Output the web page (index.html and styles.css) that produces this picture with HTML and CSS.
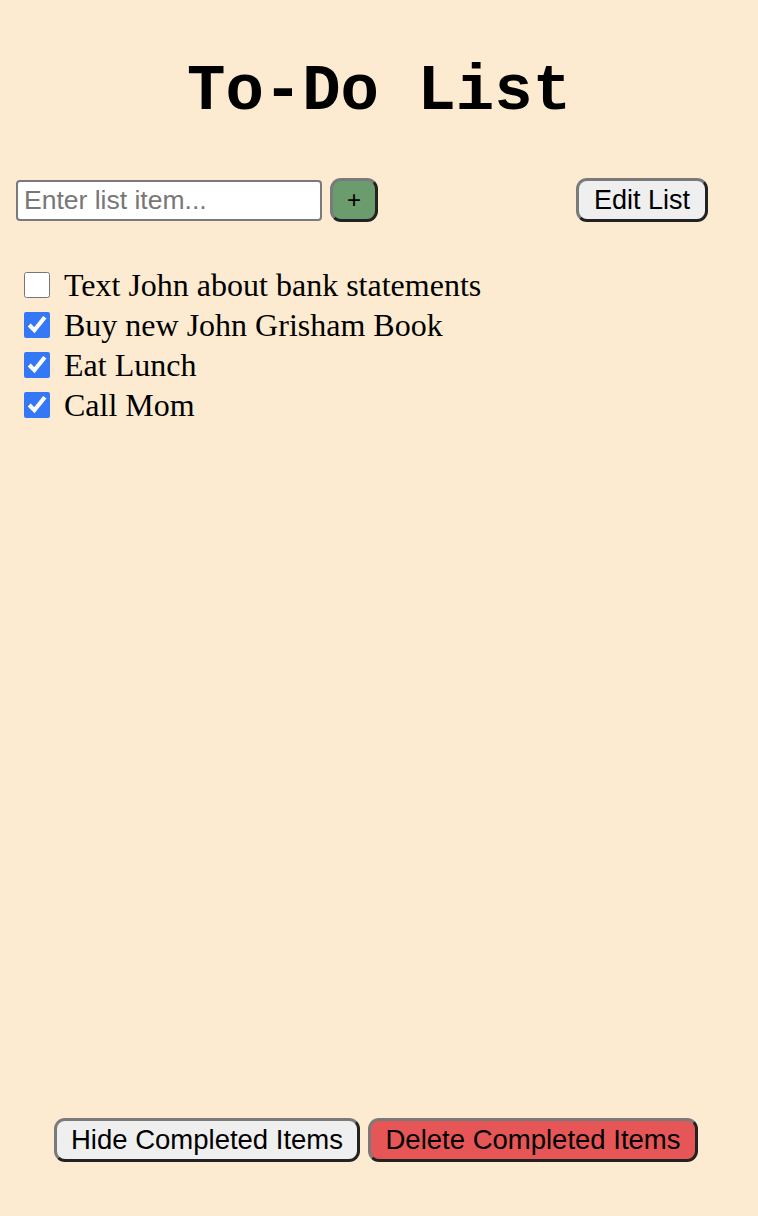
FILE: index.html
```html
<!DOCTYPE html>
<html>
<head>
<meta charset="utf-8">
<link rel="stylesheet" href="styles.css">
</head>
<body>
<div class="page">
  <h1 class="title">To-Do List</h1>
  <div class="toolbar">
    <div class="add-group">
      <input class="item-input" type="text" placeholder="Enter list item...">
      <button class="btn btn-add">+</button>
    </div>
    <button class="btn btn-edit">Edit List</button>
  </div>
  <ul class="todo-list">
    <li class="todo"><input type="checkbox" class="check"><span>Text John about bank statements</span></li>
    <li class="todo"><input type="checkbox" class="check" checked><span>Buy new John Grisham Book</span></li>
    <li class="todo"><input type="checkbox" class="check" checked><span>Eat Lunch</span></li>
    <li class="todo"><input type="checkbox" class="check" checked><span>Call Mom</span></li>
  </ul>
  <div class="footer">
    <button class="btn btn-hide">Hide Completed Items</button>
    <button class="btn btn-delete">Delete Completed Items</button>
  </div>
</div>
</body>
</html>
```

FILE: styles.css
```css
html, body {
  margin: 0;
  padding: 0;
  background: #fcebd0;
}
.page {
  min-height: 1216px;
  box-sizing: border-box;
  display: flex;
  flex-direction: column;
  padding: 0 16px 0 16px;
}
.title {
  margin: 58px 0 0 0;
  text-align: center;
  font-family: "Courier New", "Liberation Mono", monospace;
  font-weight: bold;
  font-size: 64px;
  line-height: 68px;
  color: #000;
}
.toolbar {
  display: flex;
  justify-content: space-between;
  align-items: center;
  margin-top: 52px;
  padding-right: 34px;
}
.add-group {
  display: flex;
  align-items: center;
  gap: 8px;
}
.item-input {
  width: 306px;
  height: 41px;
  box-sizing: border-box;
  border: 2px solid #7a7a7a;
  border-radius: 4px;
  background: #fff;
  font-family: "Liberation Sans", Arial, sans-serif;
  font-size: 26.5px;
  padding: 0 6px;
  margin: 0;
}
.item-input::placeholder {
  color: #777;
}
.btn {
  font-family: "Liberation Sans", Arial, sans-serif;
  font-size: 27.5px;
  color: #000;
  height: 44px;
  box-sizing: border-box;
  border-width: 3px;
  border-style: solid;
  border-color: #7a7a7a #222 #222 #7a7a7a;
  border-radius: 11px;
  background: #efefef;
  padding: 0;
  margin: 0;
}
.btn-add {
  width: 48px;
  background: #6b9c6e;
  font-size: 24px;
}
.btn-edit {
  width: 132px;
  font-size: 27px;
}
.todo-list {
  list-style: none;
  margin: 43px 0 0 0;
  padding: 0 0 0 8px;
}
.todo {
  display: flex;
  align-items: center;
  height: 40px;
  font-family: "Liberation Serif", "Times New Roman", serif;
  font-size: 32px;
  color: #000;
}
.check {
  width: 26px;
  height: 26px;
  margin: 0 14px 0 0;
  accent-color: #3478f6;
}
.footer {
  margin-top: auto;
  margin-bottom: 54px;
  display: flex;
  justify-content: center;
  gap: 8px;
  padding-right: 6px;
}
.btn-hide {
  width: 306px;
}
.btn-delete {
  width: 330px;
  background: #e65656;
}
```
